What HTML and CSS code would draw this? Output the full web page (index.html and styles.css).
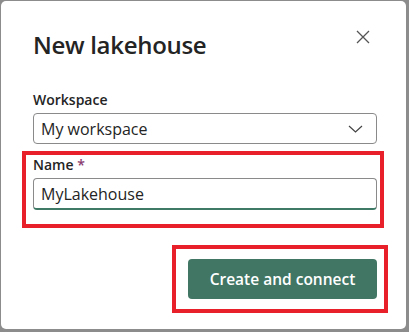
FILE: index.html
```html
<!DOCTYPE html>
<html lang="en">
  <head>
    <meta charset="UTF-8" />
    <title>New lakehouse</title>
    <link rel="stylesheet" href="styles.css">
  </head>
  <body>
    <div class="dialog">
      <div class="dialog-header">
        <h1>New lakehouse</h1>
        <button class="close-btn" aria-label="Close">
          <svg width="14" height="14" viewBox="0 0 14 14">
            <path d="M1 1 L13 13 M13 1 L1 13" stroke="#555" stroke-width="1.3" fill="none" />
          </svg>
        </button>
      </div>

      <div class="field">
        <label class="field-label">Workspace</label>
        <div class="select">
          <span>My workspace</span>
          <svg width="15" height="8" viewBox="0 0 15 8">
            <path d="M1 1 L7.5 7 L14 1" stroke="#444" stroke-width="1.2" fill="none" />
          </svg>
        </div>
      </div>

      <div class="field highlight name-field">
        <label class="field-label">Name <span class="req">*</span></label>
        <div class="text-input">MyLakehouse</div>
      </div>

      <div class="dialog-footer">
        <div class="highlight btn-wrap">
          <button class="primary-btn">Create and connect</button>
        </div>
      </div>
    </div>
  </body>
</html>
```

FILE: styles.css
```css
body {
  margin: 0;
  padding: 1px 3px 3px 1px;
  background: #8c8c8c;
  font-family: 'Open Sans', 'Noto Sans', sans-serif;
  color: #242424;
}

.dialog {
  box-sizing: border-box;
  width: 405px;
  height: 328px;
  background: #fff;
  border-radius: 5px;
  padding: 24px 29px 0 32px;
}

.dialog-header {
  display: flex;
  justify-content: space-between;
  align-items: flex-start;
}

.dialog-header h1 {
  margin: 0;
  font-size: 24px;
  font-weight: 600;
  line-height: 40px;
  letter-spacing: -0.3px;
}

.close-btn {
  border: none;
  background: none;
  padding: 0;
  margin: 5px 7px 0 0;
  width: 14px;
  height: 14px;
  display: flex;
}

.field {
  display: flex;
  flex-direction: column;
}

.dialog-header + .field {
  margin-top: 25px;
}

.field-label {
  font-size: 14px;
  font-weight: 600;
  line-height: 20px;
  margin-bottom: 3px;
}

.req {
  color: #8a3b6e;
  font-weight: 600;
}

.select,
.text-input {
  box-sizing: border-box;
  height: 31px;
  border: 1px solid #8a8a8a;
  border-radius: 4px;
  padding: 0 13px 0 7px;
  font-size: 16px;
  display: flex;
  align-items: center;
  justify-content: space-between;
}

.text-input {
  height: 32px;
  border-bottom: 2px solid #3e7a66;
}

.highlight {
  border: 4px solid #e8202a;
}

.name-field {
  margin: 7px -7px 0 -11px;
  padding: 0 3px 14px 7px;
}

.dialog-footer {
  display: flex;
  justify-content: flex-end;
  margin-top: 17px;
  margin-right: -11px;
}

.btn-wrap {
  padding: 10px 7px 10px 12px;
}

.primary-btn {
  box-sizing: border-box;
  width: 189px;
  height: 40px;
  border: none;
  border-radius: 4px;
  background: #417665;
  color: #fff;
  font-family: 'Open Sans', 'Noto Sans', sans-serif;
  font-size: 15.5px;
  font-weight: 600;
}
```
